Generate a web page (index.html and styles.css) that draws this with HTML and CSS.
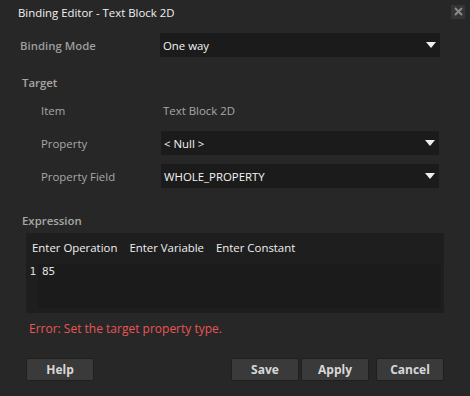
FILE: index.html
```html
<!DOCTYPE html>
<html lang="en">

<head>
    <meta charset="UTF-8">
    <title>Binding Editor - Text Block 2D</title>
    <link rel="stylesheet" href="styles.css">
</head>

<body>
    <div class="dialog">
        <div class="titlebar">
            <span class="title">Binding Editor - Text Block 2D</span>
            <span class="close">
                <svg width="9" height="9" viewBox="0 0 9 9">
                    <path d="M1 1L8 8M8 1L1 8" stroke="#8a8a8a" stroke-width="2"/>
                </svg>
            </span>
        </div>

        <div class="row mode-row">
            <span class="label strong">Binding Mode</span>
            <div class="select mode-select"><span>One way</span><i class="arrow"></i></div>
        </div>

        <div class="section-title">Target</div>
        <div class="target">
            <div class="row">
                <span class="label sub">Item</span>
                <span class="value">Text Block 2D</span>
            </div>
            <div class="row">
                <span class="label sub">Property</span>
                <div class="select"><span>&lt; Null &gt;</span><i class="arrow"></i></div>
            </div>
            <div class="row">
                <span class="label sub">Property Field</span>
                <div class="select"><span>WHOLE_PROPERTY</span><i class="arrow"></i></div>
            </div>
        </div>

        <div class="section-title expr-title">Expression</div>
        <div class="expression">
            <div class="toolbar">
                <span>Enter Operation</span>
                <span>Enter Variable</span>
                <span>Enter Constant</span>
            </div>
            <div class="editor">
                <span class="gutter">1</span>
                <div class="code">85</div>
            </div>
        </div>

        <div class="error">Error: Set the target property type.</div>

        <div class="buttons">
            <button>Help</button>
            <div class="spacer"></div>
            <button>Save</button>
            <button>Apply</button>
            <button class="cancel">Cancel</button>
        </div>
    </div>
</body>

</html>
```

FILE: styles.css
```css
html,
body {
    margin: 0;
    background: #272727;
}

body {
    font-family: "Open Sans", sans-serif;
    font-size: 11.4px;
    color: #e8e8e8;
}

.dialog {
    width: 470px;
    height: 396px;
    box-sizing: border-box;
}

.titlebar {
    height: 25px;
    display: flex;
    align-items: center;
    padding-left: 18px;
    padding-right: 5px;
}

.title {
    flex: 1;
    color: #f2f2f2;
}

.close {
    width: 14px;
    height: 14px;
    background: #353535;
    display: flex;
    align-items: center;
    justify-content: center;
    margin-bottom: 2px;
}

.row {
    display: flex;
    align-items: center;
    height: 24px;
}

.mode-row {
    margin-top: 8px;
    padding-left: 20px;
}

.label {
    color: #a8a8a8;
    width: 140px;
}

.strong {
    font-weight: 600;
    color: #9d9d9d;
}

.select {
    position: relative;
    width: 278px;
    height: 24px;
    background: #1b1b1b;
    display: flex;
    align-items: center;
    padding-left: 3px;
    box-sizing: border-box;
    color: #f4f4f4;
}

.mode-select {
    width: 280px;
}

.arrow {
    position: absolute;
    right: 4px;
    top: 9px;
    width: 0;
    height: 0;
    border-left: 5px solid transparent;
    border-right: 5px solid transparent;
    border-top: 6px solid #f0f0f0;
}

.section-title {
    padding-left: 22px;
    margin-top: 18px;
    color: #a8a8a8;
    font-weight: 600;
}

.target {
    padding-left: 41px;
    margin-top: 8px;
    display: flex;
    flex-direction: column;
    gap: 9px;
}

.target .label {
    width: 120px;
}

.value {
    color: #a8a8a8;
    padding-left: 2px;
}

.expr-title {
    margin-top: 25px;
}

.expression {
    margin: 5px 26px 0;
    height: 80px;
    background: #1e1e1e;
    display: flex;
    flex-direction: column;
}

.toolbar {
    display: flex;
    gap: 12px;
    padding: 3px 6px 0;
    height: 23px;
    align-items: center;
    color: #f0f0f0;
}

.editor {
    display: flex;
    margin: 5px 3px 0 0;
    height: 44px;
}

.gutter {
    width: 10px;
    font-family: "DejaVu Sans Mono", monospace;
    font-size: 11px;
    color: #cfe0ee;
    text-align: right;
    padding-top: 1px;
}

.code {
    flex: 1;
    margin-left: 2px;
    background: #1b1b1b;
    font-family: "DejaVu Sans Mono", monospace;
    font-size: 11px;
    color: #e0e0e0;
    padding: 1px 4px;
}

.error {
    padding-left: 29px;
    margin-top: 7px;
    color: #e85656;
    font-size: 12px;
}

.buttons {
    display: flex;
    padding: 0 26px;
    margin-top: 21px;
    gap: 2px;
}

.spacer {
    flex: 1;
}

button {
    width: 68px;
    height: 23px;
    background: #3a3a3a;
    border: 1px solid #1f1f1f;
    border-radius: 2px;
    color: #d8d8d8;
    font-family: "Open Sans", sans-serif;
    font-size: 12px;
    font-weight: 700;
    padding: 0;
}

.cancel {
    margin-left: 5px;
}
```
